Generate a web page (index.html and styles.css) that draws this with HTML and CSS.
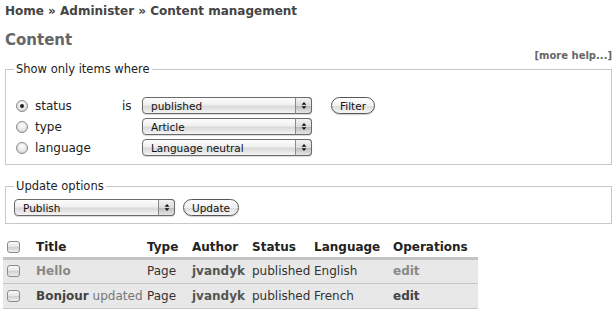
FILE: index.html
```html
<!DOCTYPE html>
<html lang="en">
<head>
    <meta charset="UTF-8">
    <title>Content management</title>
    <link rel="stylesheet" href="styles.css">
</head>
<body>
    <div class="page">
        <div class="breadcrumb">
            <a href="#">Home</a> » <a href="#">Administer</a> » <a href="#">Content management</a>
        </div>

        <h2 class="title">Content</h2>
        <div class="more-help"><a href="#">[more help...]</a></div>

        <!-- filter form -->
        <fieldset class="box filters">
            <legend>Show only items where</legend>
            <div class="filter-grid">
                <label class="choice"><input type="radio" name="filter" checked> status</label>
                <span class="op">is</span>
                <span class="select wide">
                    <select><option>published</option></select>
                    <svg class="arrows" width="10" height="11" viewBox="0 0 10 11"><path d="M5 1 L8 4.5 H2 Z M5 10 L8 6.5 H2 Z" fill="#111"/></svg>
                </span>
                <span class="actions"><button class="btn">Filter</button></span>

                <label class="choice"><input type="radio" name="filter"> type</label>
                <span class="op"></span>
                <span class="select wide">
                    <select><option>Article</option></select>
                    <svg class="arrows" width="10" height="11" viewBox="0 0 10 11"><path d="M5 1 L8 4.5 H2 Z M5 10 L8 6.5 H2 Z" fill="#111"/></svg>
                </span>
                <span></span>

                <label class="choice"><input type="radio" name="filter"> language</label>
                <span class="op"></span>
                <span class="select wide">
                    <select><option>Language neutral</option></select>
                    <svg class="arrows" width="10" height="11" viewBox="0 0 10 11"><path d="M5 1 L8 4.5 H2 Z M5 10 L8 6.5 H2 Z" fill="#111"/></svg>
                </span>
                <span></span>
            </div>
        </fieldset>

        <fieldset class="box updates">
            <legend>Update options</legend>
            <div class="update-row">
                <span class="select narrow">
                    <select><option>Publish</option></select>
                    <svg class="arrows" width="10" height="11" viewBox="0 0 10 11"><path d="M5 1 L8 4.5 H2 Z M5 10 L8 6.5 H2 Z" fill="#111"/></svg>
                </span>
                <button class="btn">Update</button>
            </div>
        </fieldset>

        <table class="nodes">
            <thead>
                <tr>
                    <th class="col-check"><input type="checkbox" class="check"></th>
                    <th class="col-title">Title</th>
                    <th class="col-type">Type</th>
                    <th class="col-author">Author</th>
                    <th class="col-status">Status</th>
                    <th class="col-lang">Language</th>
                    <th class="col-ops">Operations</th>
                </tr>
            </thead>
            <tbody>
                <tr>
                    <td><input type="checkbox" class="check"></td>
                    <td><a href="#" class="node-link visited">Hello</a></td>
                    <td>Page</td>
                    <td><a href="#" class="user-link">jvandyk</a></td>
                    <td>published</td>
                    <td>English</td>
                    <td><a href="#" class="op-link visited">edit</a></td>
                </tr>
                <tr>
                    <td><input type="checkbox" class="check"></td>
                    <td><a href="#" class="node-link">Bonjour</a> <span class="marker">updated</span></td>
                    <td>Page</td>
                    <td><a href="#" class="user-link">jvandyk</a></td>
                    <td>published</td>
                    <td>French</td>
                    <td><a href="#" class="op-link">edit</a></td>
                </tr>
            </tbody>
        </table>
    </div>
</body>
</html>
```

FILE: styles.css
```css
* {
    margin: 0;
    padding: 0;
    box-sizing: border-box;
}

body {
    font-family: "DejaVu Sans", "Bitstream Vera Sans", sans-serif;
    font-size: 12px;
    color: #333;
    background: #fff;
}

a {
    text-decoration: none;
}

.page {
    padding: 0 4px 0 5px;
}

.breadcrumb {
    padding-top: 3px;
    font-size: 12px;
    font-weight: bold;
    line-height: 16px;
    color: #444;
}

.breadcrumb a {
    color: #444;
}

.title {
    margin-top: 12px;
    font-size: 15px;
    line-height: 18px;
    color: #666;
}

.more-help {
    text-align: right;
    font-size: 10px;
    font-weight: bold;
    line-height: 12px;
    margin-top: 1px;
}

.more-help a {
    color: #666;
}

.box {
    border: 1px solid #c8c8c8;
    padding: 0 8px;
}

.box legend {
    padding: 0 2px;
    font-size: 11.5px;
    line-height: 14px;
    color: #222;
}

.filters {
    padding-top: 19px;
    padding-bottom: 6px;
}

.filter-grid {
    display: grid;
    grid-template-columns: 108px 20px 189px auto;
    grid-auto-rows: 21px;
    align-items: center;
}

.choice {
    display: flex;
    align-items: center;
    gap: 7px;
    padding-left: 2px;
    font-size: 12px;
    color: #222;
}

.choice input {
    appearance: none;
    width: 12px;
    height: 12px;
    border-radius: 50%;
    border: 1px solid #8a8a8a;
    background: radial-gradient(circle at 50% 35%, #fff 0%, #e6e6e6 55%, #c4c4c4 100%);
    position: relative;
}

.choice input:checked::after {
    content: "";
    position: absolute;
    left: 3px;
    top: 3px;
    width: 4px;
    height: 4px;
    border-radius: 50%;
    background: #222;
}

.op {
    font-size: 12px;
    color: #222;
}

.select {
    position: relative;
    display: inline-block;
    height: 17px;
}

.select.wide {
    width: 170px;
}

.select.narrow {
    width: 161px;
}

.select select {
    appearance: none;
    width: 100%;
    height: 17px;
    padding: 0 20px 0 8px;
    border: 1px solid #6a6a6a;
    border-radius: 4px;
    font-family: inherit;
    font-size: 10.5px;
    color: #111;
    background: linear-gradient(to bottom, #fdfdfd 0%, #f0f0f0 45%, #d9d9d9 55%, #f4f4f4 100%);
    box-shadow: 0 1px 1px rgba(0, 0, 0, 0.15);
}

.select .arrows {
    position: absolute;
    right: 0;
    top: 0;
    width: 17px;
    height: 17px;
    padding: 3px 3px 3px 4px;
    border-left: 1px solid #8a8a8a;
    border-radius: 0 4px 4px 0;
    background: linear-gradient(to bottom, #f4f4f4 0%, #dcdcdc 50%, #bdbdbd 55%, #e6e6e6 100%);
    border-top: 1px solid #6a6a6a;
    border-right: 1px solid #6a6a6a;
    border-bottom: 1px solid #6a6a6a;
}

.btn {
    height: 17px;
    padding: 0 8px;
    border: 1px solid #555;
    border-radius: 9px;
    font-family: inherit;
    font-size: 10.5px;
    color: #111;
    background: linear-gradient(to bottom, #fff 0%, #f2f2f2 50%, #dedede 55%, #f6f6f6 100%);
    box-shadow: 0 1px 1px rgba(0, 0, 0, 0.2);
}

.actions {
    display: flex;
}

.updates {
    margin-top: 14px;
    padding-top: 6px;
    padding-bottom: 7px;
}

.update-row {
    display: flex;
    align-items: center;
    gap: 8px;
}

.nodes {
    margin-top: 13px;
    margin-left: -2px;
    width: 475px;
    table-layout: fixed;
    border-collapse: collapse;
}

.nodes th {
    text-align: left;
    height: 21px;
    padding: 0 3px;
    font-weight: bold;
    color: #222;
    border-bottom: 3px solid #c4c4c4;
}

.nodes td {
    height: 25px;
    padding: 0 3px;
    background: #e8e8e8;
    border-bottom: 1px solid #c6c6c6;
    white-space: nowrap;
}

.col-check { width: 30px; }
.col-title { width: 111px; }
.col-type { width: 45px; }
.col-author { width: 60px; }
.col-status { width: 62px; }
.col-lang { width: 79px; }
.col-ops { width: 88px; }

.check {
    appearance: none;
    display: block;
    width: 13px;
    height: 12px;
    margin-left: 1px;
    border: 1px solid #8a8a8a;
    border-radius: 3px;
    background: linear-gradient(to bottom, #fafafa 0%, #e4e4e4 50%, #d0d0d0 55%, #eee 100%);
}

.node-link {
    font-weight: bold;
    color: #444;
}

.user-link {
    font-weight: bold;
    color: #555;
}

.op-link {
    font-weight: bold;
    color: #444;
}

.visited {
    color: #888;
}

.marker {
    color: #777;
}
```
